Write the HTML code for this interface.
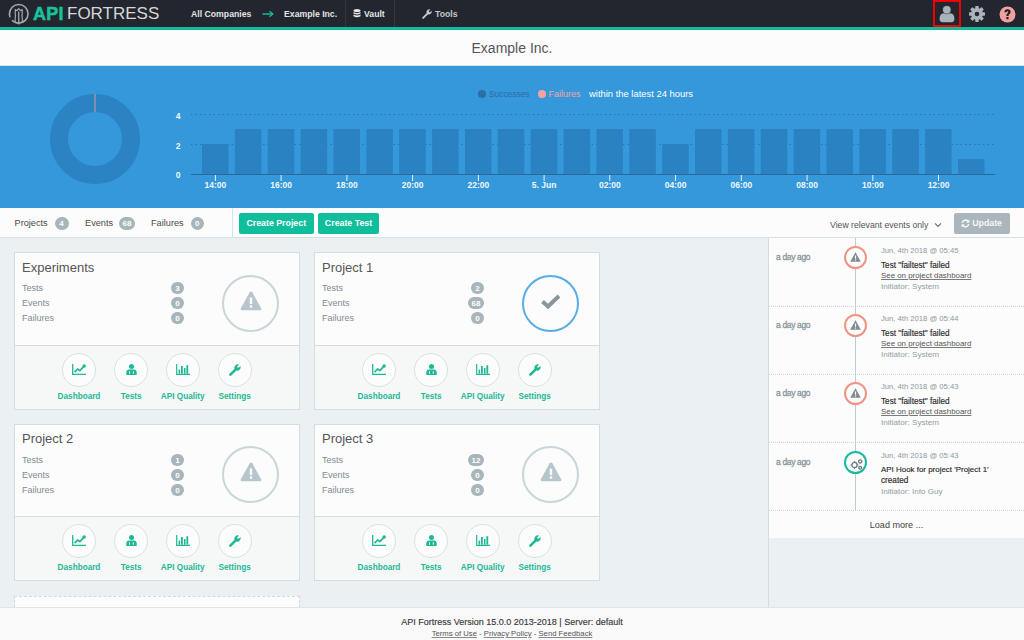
<!DOCTYPE html>
<html><head><meta charset="utf-8">
<style>
*{box-sizing:border-box;margin:0;padding:0}
html,body{width:1024px;height:640px;overflow:hidden}
body{position:relative;background:#ebf0f3;font-family:"Liberation Sans",sans-serif;color:#555}
.a{position:absolute;white-space:nowrap}
#hdr{left:0;top:0;width:1024px;height:27px;background:#23262e}
#teal{left:0;top:27px;width:1024px;height:3px;background:#10bc9a}
#title{left:0;top:30px;width:1024px;height:36px;background:#fcfcfc;border-bottom:1px solid #dde4e8}
#banner{left:0;top:66px;width:1024px;height:142px;background:#3498db}
#tool{left:0;top:208px;width:1024px;height:30px;background:#fcfcfc;border-bottom:1px solid #d6dfe4}
#foot{left:0;top:607px;width:1024px;height:33px;background:#f9f9f9;border-top:1px solid #dfe5e8}
.nav{font-size:8.7px;font-weight:bold;color:#e2e4e6;top:8px;line-height:12px}
.sep{top:0;width:1px;height:27px;background:#34373f}
.tl{top:216.8px;font-size:9.2px;line-height:13px;color:#4a4a4a}
.badge{height:12.5px;border-radius:7px;background:#a8b5bb;color:#fff;font-size:8px;font-weight:bold;line-height:13px;text-align:center}
.btn{top:213px;height:20.5px;border-radius:2px;background:#11be9c;color:#fff;font-size:8.8px;font-weight:bold;line-height:21.5px;text-align:center}
.card{width:286px;height:157px;background:#fcfcfc;border:1px solid #d3dee4}
.card .ctitle{left:7px;top:6.8px;font-size:13px;line-height:16px;color:#555}
.card .clab{left:7px;font-size:9px;line-height:12px;color:#7f8b92}
.stat{left:207px;top:21.5px;width:57px;height:57px;border-radius:50%;border:2px solid #c8d5db}
.cfoot{left:0;top:92px;width:284px;height:63px;background:#f6f7f7;border-top:1px solid #d3dee4}
.fcirc{top:6.5px;width:34px;height:34px;border-radius:50%;border:1px solid #d8e1e6;background:#fcfcfc;display:flex;align-items:center;justify-content:center}
.flab{top:45px;width:60px;text-align:center;font-size:8.2px;font-weight:bold;line-height:12px;color:#1db895}
.ago{left:776px;font-size:8.5px;letter-spacing:-0.35px;-webkit-text-stroke:0.3px #8a969c;line-height:12px;color:#8a969c}
.evc{left:844px;width:23px;height:23px;border-radius:50%;border:2px solid #ec8f7c;background:#fcfcfc}
.evd{left:881px;font-size:7.65px;line-height:11px;color:#929da3}
.evt{left:881px;font-size:8.2px;line-height:11px;color:#2a2a2a;-webkit-text-stroke:0.15px #2a2a2a}
.evl{left:881px;font-size:7.9px;line-height:11px;color:#555;text-decoration:underline;text-decoration-color:#7a7a7a}
</style></head><body>
<div id="hdr" class="a"></div>
<div id="teal" class="a"></div>
<div id="title" class="a"></div>
<div id="banner" class="a"></div>
<div id="tool" class="a"></div>
<div id="foot" class="a"></div>

<!-- header -->
<svg class="a" style="left:8px;top:3px" width="22" height="22" viewBox="0 0 22 22">
 <circle cx="10.75" cy="10.85" r="9.3" fill="none" stroke="#a4a7ab" stroke-width="1.6" stroke-dasharray="22 3.5 40"/>
 <path d="M7.3 19.5 Q6.9 17 7.3 14.5 Q7.9 12.5 7.2 10 L7.4 6.8 L9 7.6 L10.75 5.6 L12.5 7.6 L14.1 6.8 L14.3 10 Q13.6 12.5 14.2 14.5 Q14.6 17 14.2 19.5" fill="none" stroke="#a4a7ab" stroke-width="1.2"/>
 <path d="M10.75 8.5 V21.5" stroke="#a4a7ab" stroke-width="1.3"/>
</svg>
<div class="a" style="left:33px;top:3px;font-size:18px;line-height:22px;font-weight:bold;color:#19c29c;letter-spacing:0.2px;-webkit-text-stroke:0.5px #19c29c">API</div>
<div class="a" style="left:67px;top:3px;font-size:17px;line-height:22px;color:#d6d7d9;letter-spacing:0px">FORTRESS</div>

<div class="a nav" style="left:191px">All Companies</div>
<svg class="a" style="left:262px;top:10px" width="12" height="8" viewBox="0 0 12 8"><path d="M0.5 4 H10" stroke="#19c29c" stroke-width="1.4"/><path d="M7.5 1.2 L10.8 4 L7.5 6.8" fill="none" stroke="#19c29c" stroke-width="1.3"/></svg>
<div class="a nav" style="left:284px">Example Inc.</div>
<div class="a sep" style="left:345px"></div>
<svg class="a" style="left:353px;top:9px" width="8" height="10" viewBox="0 0 8 10"><ellipse cx="4" cy="1.6" rx="3.5" ry="1.5" fill="#e6e8ea"/><path d="M0.5 3 Q4 5 7.5 3 V4.6 Q4 6.6 0.5 4.6Z M0.5 5.6 Q4 7.6 7.5 5.6 V7.2 Q4 9.2 0.5 7.2Z" fill="#e6e8ea"/></svg>
<div class="a nav" style="left:364px">Vault</div>
<div class="a sep" style="left:394px"></div>
<svg class="a" style="left:422px;top:9px" width="10" height="10" viewBox="0 0 12 12"><path d="M1.4 10.6 L6.2 5.8" stroke="#c4c8cc" stroke-width="2.4" stroke-linecap="round"/><path d="M5.4 4.6 A3.5 3.5 0 0 1 10 0.6 L8.2 2.4 L8.4 3.6 L9.6 3.8 L11.4 2 A3.5 3.5 0 0 1 7.4 6.6Z" fill="#c4c8cc"/></svg>
<div class="a nav" style="left:435px;color:#c4c8cc">Tools</div>

<div class="a" style="left:933px;top:0px;width:28px;height:27px;border:2.7px solid #f00000"></div>
<svg class="a" style="left:939px;top:5px" width="16" height="18" viewBox="0 0 16 18"><path d="M0.6 13.5 Q0.6 8.3 5.5 8.3 H10.5 Q15.4 8.3 15.4 13.5 Q15.4 17.2 12.5 17.2 H3.5 Q0.6 17.2 0.6 13.5Z" fill="#a9b4ba"/><circle cx="7.8" cy="4.8" r="4.1" fill="#a9b4ba" stroke="#23262e" stroke-width="0.4"/></svg>
<svg class="a" style="left:968px;top:5px" width="18" height="18" viewBox="0 0 18 18"><g fill="#a9b3ba"><circle cx="9" cy="9" r="6"/><rect x="7.3" y="1" width="3.4" height="16" rx="0.6"/><rect x="7.3" y="1" width="3.4" height="16" rx="0.6" transform="rotate(45 9 9)"/><rect x="7.3" y="1" width="3.4" height="16" rx="0.6" transform="rotate(90 9 9)"/><rect x="7.3" y="1" width="3.4" height="16" rx="0.6" transform="rotate(135 9 9)"/></g><circle cx="9" cy="9" r="2.3" fill="#23262e"/></svg>
<svg class="a" style="left:999px;top:6px" width="17" height="17" viewBox="0 0 17 17"><circle cx="8.5" cy="8.5" r="8" fill="#f2a09e"/><path d="M5.4 6.3 Q5.4 3.2 8.5 3.2 Q11.6 3.2 11.6 5.9 Q11.6 7.6 9.9 8.5 Q9.6 8.8 9.6 9.9 H7.3 Q7.3 8 8.6 7.2 Q9.3 6.7 9.3 6.1 Q9.3 5.3 8.5 5.3 Q7.7 5.3 7.7 6.3Z" fill="#222226"/><rect x="7.3" y="10.9" width="2.3" height="2.3" rx="0.3" fill="#222226"/></svg>

<!-- title -->
<div class="a" style="left:0;top:39px;width:1024px;text-align:center;font-size:14px;line-height:18px;color:#555">Example Inc.</div>

<!-- banner -->
<svg class="a" style="left:0;top:0" width="1024" height="208" viewBox="0 0 1024 208">
 <circle cx="95" cy="139" r="36" fill="none" stroke="#2b83c3" stroke-width="18"/>
 <line x1="95" y1="94" x2="95" y2="112" stroke="#d59aa2" stroke-width="1"/>
 <g stroke="#2676b0" stroke-width="1" stroke-dasharray="1.5 3"><line x1="191" y1="114.5" x2="995" y2="114.5"/><line x1="191" y1="144.5" x2="995" y2="144.5"/></g>
 <g fill="#2a82c2"><rect x="202.0" y="144" width="26.5" height="30"/><rect x="234.9" y="129" width="26.5" height="45"/><rect x="267.7" y="129" width="26.5" height="45"/><rect x="300.6" y="129" width="26.5" height="45"/><rect x="333.5" y="129" width="26.5" height="45"/><rect x="366.4" y="129" width="26.5" height="45"/><rect x="399.2" y="129" width="26.5" height="45"/><rect x="432.1" y="129" width="26.5" height="45"/><rect x="465.0" y="129" width="26.5" height="45"/><rect x="497.8" y="129" width="26.5" height="45"/><rect x="530.7" y="129" width="26.5" height="45"/><rect x="563.6" y="129" width="26.5" height="45"/><rect x="596.4" y="129" width="26.5" height="45"/><rect x="629.3" y="129" width="26.5" height="45"/><rect x="662.2" y="144" width="26.5" height="30"/><rect x="695.0" y="129" width="26.5" height="45"/><rect x="727.9" y="129" width="26.5" height="45"/><rect x="760.8" y="129" width="26.5" height="45"/><rect x="793.7" y="129" width="26.5" height="45"/><rect x="826.5" y="129" width="26.5" height="45"/><rect x="859.4" y="129" width="26.5" height="45"/><rect x="892.3" y="129" width="26.5" height="45"/><rect x="925.1" y="129" width="26.5" height="45"/><rect x="958.0" y="159" width="26.5" height="15"/></g>
 <line x1="191" y1="174.5" x2="995" y2="174.5" stroke="#2a6a98" stroke-width="1"/>
 <g stroke="#e9f2f9" stroke-width="1"><line x1="215.4" y1="175" x2="215.4" y2="181"/><line x1="281.1" y1="175" x2="281.1" y2="181"/><line x1="346.9" y1="175" x2="346.9" y2="181"/><line x1="412.6" y1="175" x2="412.6" y2="181"/><line x1="478.4" y1="175" x2="478.4" y2="181"/><line x1="544.1" y1="175" x2="544.1" y2="181"/><line x1="609.8" y1="175" x2="609.8" y2="181"/><line x1="675.6" y1="175" x2="675.6" y2="181"/><line x1="741.3" y1="175" x2="741.3" y2="181"/><line x1="807.1" y1="175" x2="807.1" y2="181"/><line x1="872.8" y1="175" x2="872.8" y2="181"/><line x1="938.5" y1="175" x2="938.5" y2="181"/></g>
 <g fill="#f2f7fb" font-family="Liberation Sans" font-size="8.5" font-weight="bold" text-anchor="middle"><text x="215.4" y="188">14:00</text><text x="281.1" y="188">16:00</text><text x="346.9" y="188">18:00</text><text x="412.6" y="188">20:00</text><text x="478.4" y="188">22:00</text><text x="544.1" y="188">5. Jun</text><text x="609.8" y="188">02:00</text><text x="675.6" y="188">04:00</text><text x="741.3" y="188">06:00</text><text x="807.1" y="188">08:00</text><text x="872.8" y="188">10:00</text><text x="938.5" y="188">12:00</text>
 <text x="178" y="118.5">4</text><text x="178" y="148.5">2</text><text x="178" y="178.3">0</text></g>
 <circle cx="482" cy="94" r="4" fill="#2a6fa5"/>
 <circle cx="542" cy="94" r="4" fill="#f3a3a3"/>
 <g font-family="Liberation Sans" font-size="9.4" lengthAdjust="spacingAndGlyphs"><text x="489" y="97.2" fill="#2a6fa5" textLength="40.5" lengthAdjust="spacingAndGlyphs">Successes</text><text x="548.5" y="97.2" fill="#f3a3a3" textLength="32" lengthAdjust="spacingAndGlyphs">Failures</text><text x="589" y="97.2" fill="#ffffff" textLength="104" lengthAdjust="spacingAndGlyphs">within the latest 24 hours</text></g>
</svg>
<div class="a tl" style="left:14.5px">Projects</div><div class="badge a" style="left:54.5px;top:217px;width:14px">4</div>
<div class="a tl" style="left:85px">Events</div><div class="badge a" style="left:119px;top:217px;width:16px">68</div>
<div class="a tl" style="left:151px">Failures</div><div class="badge a" style="left:190.5px;top:217px;width:13.5px">0</div>
<div class="a" style="left:232px;top:208px;width:1px;height:30px;background:#d8e1e6"></div>
<div class="a btn" style="left:239px;width:74.5px">Create Project</div>
<div class="a btn" style="left:318px;width:61px">Create Test</div>
<div class="a tl" style="left:830px;top:218.5px;font-size:8.7px;color:#555">View relevant events only</div>
<svg class="a" style="left:933.5px;top:222px" width="8" height="6" viewBox="0 0 8 6"><path d="M1 1.4 L4 4.4 L7 1.4" fill="none" stroke="#6a6a6a" stroke-width="1.1"/></svg>
<div class="a btn" style="left:954px;width:56px;background:#aab6bc;color:#f4f6f7;padding-left:18.2px;text-align:left;line-height:21.5px">Update</div><svg class="a" style="left:961px;top:218.5px" width="9" height="9" viewBox="0 0 9 9"><path d="M1.3 4 A3.3 3.3 0 0 1 7.3 2.6" fill="none" stroke="#f4f6f7" stroke-width="1.5"/><path d="M8.4 0.6 V3.8 H5.2Z" fill="#f4f6f7"/><path d="M7.7 5 A3.3 3.3 0 0 1 1.7 6.4" fill="none" stroke="#f4f6f7" stroke-width="1.5"/><path d="M0.6 8.4 V5.2 H3.8Z" fill="#f4f6f7"/></svg>
<div class="card a" style="left:14px;top:252px;height:158px"><div class="ctitle a" style="top:6.8px">Experiments</div><div class="clab a" style="top:29.2px">Tests</div><div class="badge a" style="left:156px;top:28.8px;width:13px">3</div><div class="clab a" style="top:44.2px">Events</div><div class="badge a" style="left:156px;top:43.8px;width:13px">0</div><div class="clab a" style="top:59.2px">Failures</div><div class="badge a" style="left:156px;top:58.8px;width:13px">0</div><div class="stat a" style="top:21.5px"></div><div class="a" style="left:224.5px;top:37.5px;line-height:0"><svg width="22" height="20" viewBox="0 0 22 20"><path d="M11 0.5 Q11.8 0.5 12.3 1.3 L21.3 17.6 Q21.8 19.3 20 19.3 H2 Q0.2 19.3 0.7 17.6 L9.7 1.3 Q10.2 0.5 11 0.5Z" fill="#b7c6cd"/><rect x="9.8" y="6.5" width="2.4" height="6.5" fill="#fcfcfc"/><rect x="9.8" y="14.3" width="2.4" height="2.4" fill="#fcfcfc"/></svg></div><div class="cfoot a" style="top:92px;height:64px"><div class="fcirc a" style="left:47px"><svg width="14" height="11" viewBox="0 0 14 11"><path d="M0.7 0 V10.3 H14" fill="none" stroke="#1db895" stroke-width="1.3"/><path d="M2.6 8.2 L5.6 5 L7.8 6.7 L11.6 2.6" fill="none" stroke="#1db895" stroke-width="1.7" stroke-linejoin="round"/><circle cx="12.2" cy="2" r="1.7" fill="#1db895"/></svg></div><div class="flab a" style="left:34px">Dashboard</div><div class="fcirc a" style="left:99.2px"><svg width="11" height="11" viewBox="0 0 11 11"><circle cx="5.5" cy="2.6" r="2.5" fill="#1db895"/><path d="M0.3 11 V8.6 Q0.3 5.6 3.2 5.6 H7.8 Q10.7 5.6 10.7 8.6 V11Z" fill="#1db895"/><rect x="3" y="7.3" width="1" height="2.4" fill="#fcfcfc"/><rect x="6.8" y="7.3" width="1" height="2.4" fill="#fcfcfc"/></svg></div><div class="flab a" style="left:86.2px">Tests</div><div class="fcirc a" style="left:150.7px"><svg width="14" height="11" viewBox="0 0 14 11"><path d="M0.7 0 V10.3 H14" fill="none" stroke="#1db895" stroke-width="1.2"/><g fill="#1db895"><rect x="2.6" y="5.5" width="1.5" height="4.2"/><rect x="5" y="2" width="1.8" height="7.7"/><rect x="8" y="4" width="1.5" height="5.7"/><rect x="10.4" y="1.2" width="1.8" height="8.5"/></g></svg></div><div class="flab a" style="left:137.7px">API Quality</div><div class="fcirc a" style="left:202.7px"><svg width="12" height="12" viewBox="0 0 12 12"><path d="M1.4 10.6 L6.2 5.8" stroke="#1db895" stroke-width="2.6" stroke-linecap="round"/><path d="M5.4 4.6 A3.5 3.5 0 0 1 10 0.6 L8.2 2.4 L8.4 3.6 L9.6 3.8 L11.4 2 A3.5 3.5 0 0 1 7.4 6.6Z" fill="#1db895"/></svg></div><div class="flab a" style="left:189.7px">Settings</div></div></div>
<div class="card a" style="left:314px;top:252px;height:158px"><div class="ctitle a" style="top:6.8px">Project 1</div><div class="clab a" style="top:29.2px">Tests</div><div class="badge a" style="left:156px;top:28.8px;width:13px">2</div><div class="clab a" style="top:44.2px">Events</div><div class="badge a" style="left:153px;top:43.8px;width:16px">68</div><div class="clab a" style="top:59.2px">Failures</div><div class="badge a" style="left:156px;top:58.8px;width:13px">0</div><div class="stat a" style="border-color:#58ade5"></div><div class="a" style="left:225.5px;top:41px;line-height:0"><svg width="20" height="15" viewBox="0 0 20 15"><path d="M1.5 7.5 L7 12.5 L18 2" fill="none" stroke="#8a959c" stroke-width="4"/></svg></div><div class="cfoot a" style="top:92px;height:64px"><div class="fcirc a" style="left:47px"><svg width="14" height="11" viewBox="0 0 14 11"><path d="M0.7 0 V10.3 H14" fill="none" stroke="#1db895" stroke-width="1.3"/><path d="M2.6 8.2 L5.6 5 L7.8 6.7 L11.6 2.6" fill="none" stroke="#1db895" stroke-width="1.7" stroke-linejoin="round"/><circle cx="12.2" cy="2" r="1.7" fill="#1db895"/></svg></div><div class="flab a" style="left:34px">Dashboard</div><div class="fcirc a" style="left:99.2px"><svg width="11" height="11" viewBox="0 0 11 11"><circle cx="5.5" cy="2.6" r="2.5" fill="#1db895"/><path d="M0.3 11 V8.6 Q0.3 5.6 3.2 5.6 H7.8 Q10.7 5.6 10.7 8.6 V11Z" fill="#1db895"/><rect x="3" y="7.3" width="1" height="2.4" fill="#fcfcfc"/><rect x="6.8" y="7.3" width="1" height="2.4" fill="#fcfcfc"/></svg></div><div class="flab a" style="left:86.2px">Tests</div><div class="fcirc a" style="left:150.7px"><svg width="14" height="11" viewBox="0 0 14 11"><path d="M0.7 0 V10.3 H14" fill="none" stroke="#1db895" stroke-width="1.2"/><g fill="#1db895"><rect x="2.6" y="5.5" width="1.5" height="4.2"/><rect x="5" y="2" width="1.8" height="7.7"/><rect x="8" y="4" width="1.5" height="5.7"/><rect x="10.4" y="1.2" width="1.8" height="8.5"/></g></svg></div><div class="flab a" style="left:137.7px">API Quality</div><div class="fcirc a" style="left:202.7px"><svg width="12" height="12" viewBox="0 0 12 12"><path d="M1.4 10.6 L6.2 5.8" stroke="#1db895" stroke-width="2.6" stroke-linecap="round"/><path d="M5.4 4.6 A3.5 3.5 0 0 1 10 0.6 L8.2 2.4 L8.4 3.6 L9.6 3.8 L11.4 2 A3.5 3.5 0 0 1 7.4 6.6Z" fill="#1db895"/></svg></div><div class="flab a" style="left:189.7px">Settings</div></div></div>
<div class="card a" style="left:14px;top:424px;height:157px"><div class="ctitle a" style="top:6px">Project 2</div><div class="clab a" style="top:28.7px">Tests</div><div class="badge a" style="left:156px;top:28.8px;width:13px">1</div><div class="clab a" style="top:43.7px">Events</div><div class="badge a" style="left:156px;top:43.8px;width:13px">0</div><div class="clab a" style="top:58.7px">Failures</div><div class="badge a" style="left:156px;top:58.8px;width:13px">0</div><div class="stat a" style="top:20.5px"></div><div class="a" style="left:224.5px;top:36.5px;line-height:0"><svg width="22" height="20" viewBox="0 0 22 20"><path d="M11 0.5 Q11.8 0.5 12.3 1.3 L21.3 17.6 Q21.8 19.3 20 19.3 H2 Q0.2 19.3 0.7 17.6 L9.7 1.3 Q10.2 0.5 11 0.5Z" fill="#b7c6cd"/><rect x="9.8" y="6.5" width="2.4" height="6.5" fill="#fcfcfc"/><rect x="9.8" y="14.3" width="2.4" height="2.4" fill="#fcfcfc"/></svg></div><div class="cfoot a" style="top:91px;height:64px"><div class="fcirc a" style="left:47px"><svg width="14" height="11" viewBox="0 0 14 11"><path d="M0.7 0 V10.3 H14" fill="none" stroke="#1db895" stroke-width="1.3"/><path d="M2.6 8.2 L5.6 5 L7.8 6.7 L11.6 2.6" fill="none" stroke="#1db895" stroke-width="1.7" stroke-linejoin="round"/><circle cx="12.2" cy="2" r="1.7" fill="#1db895"/></svg></div><div class="flab a" style="left:34px">Dashboard</div><div class="fcirc a" style="left:99.2px"><svg width="11" height="11" viewBox="0 0 11 11"><circle cx="5.5" cy="2.6" r="2.5" fill="#1db895"/><path d="M0.3 11 V8.6 Q0.3 5.6 3.2 5.6 H7.8 Q10.7 5.6 10.7 8.6 V11Z" fill="#1db895"/><rect x="3" y="7.3" width="1" height="2.4" fill="#fcfcfc"/><rect x="6.8" y="7.3" width="1" height="2.4" fill="#fcfcfc"/></svg></div><div class="flab a" style="left:86.2px">Tests</div><div class="fcirc a" style="left:150.7px"><svg width="14" height="11" viewBox="0 0 14 11"><path d="M0.7 0 V10.3 H14" fill="none" stroke="#1db895" stroke-width="1.2"/><g fill="#1db895"><rect x="2.6" y="5.5" width="1.5" height="4.2"/><rect x="5" y="2" width="1.8" height="7.7"/><rect x="8" y="4" width="1.5" height="5.7"/><rect x="10.4" y="1.2" width="1.8" height="8.5"/></g></svg></div><div class="flab a" style="left:137.7px">API Quality</div><div class="fcirc a" style="left:202.7px"><svg width="12" height="12" viewBox="0 0 12 12"><path d="M1.4 10.6 L6.2 5.8" stroke="#1db895" stroke-width="2.6" stroke-linecap="round"/><path d="M5.4 4.6 A3.5 3.5 0 0 1 10 0.6 L8.2 2.4 L8.4 3.6 L9.6 3.8 L11.4 2 A3.5 3.5 0 0 1 7.4 6.6Z" fill="#1db895"/></svg></div><div class="flab a" style="left:189.7px">Settings</div></div></div>
<div class="card a" style="left:314px;top:424px;height:157px"><div class="ctitle a" style="top:6px">Project 3</div><div class="clab a" style="top:28.7px">Tests</div><div class="badge a" style="left:153px;top:28.8px;width:16px">12</div><div class="clab a" style="top:43.7px">Events</div><div class="badge a" style="left:156px;top:43.8px;width:13px">0</div><div class="clab a" style="top:58.7px">Failures</div><div class="badge a" style="left:156px;top:58.8px;width:13px">0</div><div class="stat a" style="top:20.5px"></div><div class="a" style="left:224.5px;top:36.5px;line-height:0"><svg width="22" height="20" viewBox="0 0 22 20"><path d="M11 0.5 Q11.8 0.5 12.3 1.3 L21.3 17.6 Q21.8 19.3 20 19.3 H2 Q0.2 19.3 0.7 17.6 L9.7 1.3 Q10.2 0.5 11 0.5Z" fill="#b7c6cd"/><rect x="9.8" y="6.5" width="2.4" height="6.5" fill="#fcfcfc"/><rect x="9.8" y="14.3" width="2.4" height="2.4" fill="#fcfcfc"/></svg></div><div class="cfoot a" style="top:91px;height:64px"><div class="fcirc a" style="left:47px"><svg width="14" height="11" viewBox="0 0 14 11"><path d="M0.7 0 V10.3 H14" fill="none" stroke="#1db895" stroke-width="1.3"/><path d="M2.6 8.2 L5.6 5 L7.8 6.7 L11.6 2.6" fill="none" stroke="#1db895" stroke-width="1.7" stroke-linejoin="round"/><circle cx="12.2" cy="2" r="1.7" fill="#1db895"/></svg></div><div class="flab a" style="left:34px">Dashboard</div><div class="fcirc a" style="left:99.2px"><svg width="11" height="11" viewBox="0 0 11 11"><circle cx="5.5" cy="2.6" r="2.5" fill="#1db895"/><path d="M0.3 11 V8.6 Q0.3 5.6 3.2 5.6 H7.8 Q10.7 5.6 10.7 8.6 V11Z" fill="#1db895"/><rect x="3" y="7.3" width="1" height="2.4" fill="#fcfcfc"/><rect x="6.8" y="7.3" width="1" height="2.4" fill="#fcfcfc"/></svg></div><div class="flab a" style="left:86.2px">Tests</div><div class="fcirc a" style="left:150.7px"><svg width="14" height="11" viewBox="0 0 14 11"><path d="M0.7 0 V10.3 H14" fill="none" stroke="#1db895" stroke-width="1.2"/><g fill="#1db895"><rect x="2.6" y="5.5" width="1.5" height="4.2"/><rect x="5" y="2" width="1.8" height="7.7"/><rect x="8" y="4" width="1.5" height="5.7"/><rect x="10.4" y="1.2" width="1.8" height="8.5"/></g></svg></div><div class="flab a" style="left:137.7px">API Quality</div><div class="fcirc a" style="left:202.7px"><svg width="12" height="12" viewBox="0 0 12 12"><path d="M1.4 10.6 L6.2 5.8" stroke="#1db895" stroke-width="2.6" stroke-linecap="round"/><path d="M5.4 4.6 A3.5 3.5 0 0 1 10 0.6 L8.2 2.4 L8.4 3.6 L9.6 3.8 L11.4 2 A3.5 3.5 0 0 1 7.4 6.6Z" fill="#1db895"/></svg></div><div class="flab a" style="left:189.7px">Settings</div></div></div>
<div class="a" style="left:14px;top:596px;width:286px;height:11px;background:#fcfcfc;border:1px dashed #d0dbe1;border-bottom:none"></div>
<div class="a" style="left:768px;top:238px;width:256px;height:300px;background:#fcfcfc"></div>
<div class="a" style="left:768px;top:238px;width:1px;height:369px;background:#d3dde2"></div>
<div class="a" style="left:855px;top:238px;width:1px;height:272px;background:#bfcad0"></div>
<div class="ago a" style="top:251px">a day ago</div><div class="evc a" style="top:246.2px;border-color:#ef9483"><div class="a" style="left:3.8px;top:4.2px;line-height:0"><svg width="11" height="10" viewBox="0 0 11 10"><path d="M5.5 0.3 L10.8 9.7 H0.2Z" fill="#7e8a91"/><rect x="4.9" y="3.5" width="1.2" height="3.3" fill="#fcfcfc"/><rect x="4.9" y="7.5" width="1.2" height="1.2" fill="#fcfcfc"/></svg></div></div><div class="evd a" style="top:244.8px;color:#8d989e">Jun, 4th 2018 @ 05:45</div><div class="evt a" style="top:259.5px;">Test "failtest" failed</div><div class="evl a" style="top:270px">See on project dashboard</div><div class="evd a" style="top:280.5px;font-size:8.1px">Initiator: System</div><div class="a" style="left:769px;top:306px;width:255px;height:1px;border-top:1px dotted #c9d4da"></div>
<div class="ago a" style="top:319px">a day ago</div><div class="evc a" style="top:314.2px;border-color:#ef9483"><div class="a" style="left:3.8px;top:4.2px;line-height:0"><svg width="11" height="10" viewBox="0 0 11 10"><path d="M5.5 0.3 L10.8 9.7 H0.2Z" fill="#7e8a91"/><rect x="4.9" y="3.5" width="1.2" height="3.3" fill="#fcfcfc"/><rect x="4.9" y="7.5" width="1.2" height="1.2" fill="#fcfcfc"/></svg></div></div><div class="evd a" style="top:312.8px;color:#8d989e">Jun, 4th 2018 @ 05:44</div><div class="evt a" style="top:327.5px;">Test "failtest" failed</div><div class="evl a" style="top:338px">See on project dashboard</div><div class="evd a" style="top:348.5px;font-size:8.1px">Initiator: System</div><div class="a" style="left:769px;top:374px;width:255px;height:1px;border-top:1px dotted #c9d4da"></div>
<div class="ago a" style="top:387px">a day ago</div><div class="evc a" style="top:382.2px;border-color:#ef9483"><div class="a" style="left:3.8px;top:4.2px;line-height:0"><svg width="11" height="10" viewBox="0 0 11 10"><path d="M5.5 0.3 L10.8 9.7 H0.2Z" fill="#7e8a91"/><rect x="4.9" y="3.5" width="1.2" height="3.3" fill="#fcfcfc"/><rect x="4.9" y="7.5" width="1.2" height="1.2" fill="#fcfcfc"/></svg></div></div><div class="evd a" style="top:380.8px;color:#8d989e">Jun, 4th 2018 @ 05:43</div><div class="evt a" style="top:395.5px;">Test "failtest" failed</div><div class="evl a" style="top:406px">See on project dashboard</div><div class="evd a" style="top:416.5px;font-size:8.1px">Initiator: System</div><div class="a" style="left:769px;top:442px;width:255px;height:1px;border-top:1px dotted #c9d4da"></div>
<div class="ago a" style="top:455.8px">a day ago</div><div class="evc a" style="top:451.0px;border-color:#1ab99a"><div class="a" style="left:4px;top:5.5px;line-height:0"><svg width="13" height="11" viewBox="0 0 13 11"><g fill="none" stroke="#6f7b82" stroke-width="1.3"><circle cx="4.5" cy="6" r="2.6"/><circle cx="10.2" cy="2.4" r="1.6"/><circle cx="10.2" cy="8.8" r="1.4"/></g><g stroke="#6f7b82" stroke-width="1.2"><line x1="4.5" y1="2" x2="4.5" y2="3.4"/><line x1="4.5" y1="8.6" x2="4.5" y2="10"/><line x1="0.5" y1="6" x2="1.9" y2="6"/><line x1="7.1" y1="6" x2="8.5" y2="6"/></g></svg></div></div><div class="evd a" style="top:449.6px;color:#8d989e">Jun, 4th 2018 @ 05:43</div><div class="evt a" style="top:464.3px;font-size:7.95px">API Hook for project 'Project 1'</div><div class="evt a" style="top:475.3px">created</div><div class="evd a" style="top:486.3px;font-size:8.1px">Initiator: Info Guy</div><div class="a" style="left:769px;top:510px;width:255px;height:1px;border-top:1px dotted #c9d4da"></div>
<div class="a" style="left:769px;top:518px;width:255px;text-align:center;font-size:9.1px;line-height:14px;color:#444">Load more ...</div>
<div class="a" style="left:0;top:615px;width:1024px;text-align:center;font-size:9px;line-height:12px;color:#3a3a3a;top:616px;-webkit-text-stroke:0.15px #3a3a3a">API Fortress Version 15.0.0 2013-2018 | Server: default</div>
<div class="a" style="left:0;top:628px;width:1024px;text-align:center;font-size:7.7px;line-height:11px;color:#555"><u style="text-decoration-color:#8a8a8a">Terms of Use</u> - <u style="text-decoration-color:#8a8a8a">Privacy Policy</u> - <u style="text-decoration-color:#8a8a8a">Send Feedback</u></div>
</body></html>
